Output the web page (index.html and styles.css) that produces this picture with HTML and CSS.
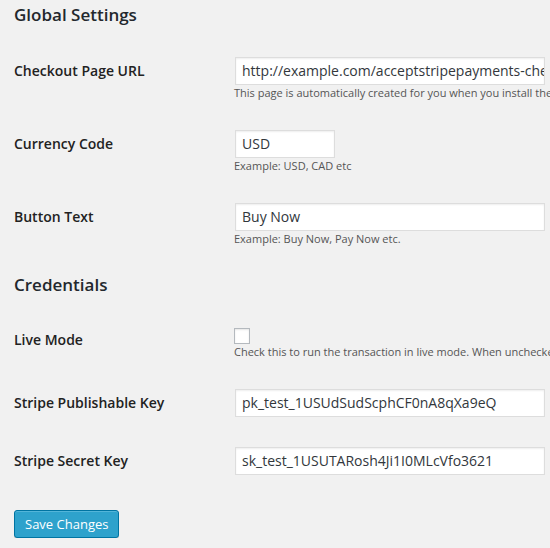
FILE: index.html
```html
<!DOCTYPE html>
<html>
<head>
<meta charset="utf-8">
<link rel="stylesheet" href="styles.css">
</head>
<body>
<div class="wrap">
  <h2 class="section-title first">Global Settings</h2>
  <div class="form-table">
    <div class="row">
      <div class="th">Checkout Page URL</div>
      <div class="td">
        <div class="input wide">http://example.com/acceptstripepayments-checkout</div>
        <p class="description">This page is automatically created for you when you install the plugin. Do not delete this page.</p>
      </div>
    </div>
    <div class="row">
      <div class="th">Currency Code</div>
      <div class="td">
        <div class="input small">USD</div>
        <p class="description">Example: USD, CAD etc</p>
      </div>
    </div>
    <div class="row">
      <div class="th">Button Text</div>
      <div class="td">
        <div class="input wide">Buy Now</div>
        <p class="description">Example: Buy Now, Pay Now etc.</p>
      </div>
    </div>
  </div>

  <h2 class="section-title">Credentials</h2>
  <div class="form-table">
    <div class="row">
      <div class="th th-check">Live Mode</div>
      <div class="td">
        <span class="checkbox"></span>
        <p class="description">Check this to run the transaction in live mode. When unchecked it will run in test mode.</p>
      </div>
    </div>
    <div class="row">
      <div class="th">Stripe Publishable Key</div>
      <div class="td">
        <div class="input wide">pk_test_1USUdSudScphCF0nA8qXa9eQ</div>
      </div>
    </div>
    <div class="row">
      <div class="th">Stripe Secret Key</div>
      <div class="td">
        <div class="input wide">sk_test_1USUTARosh4Ji1I0MLcVfo3621</div>
      </div>
    </div>
  </div>

  <p class="submit"><span class="button-primary">Save Changes</span></p>
</div>
</body>
</html>
```

FILE: styles.css
```css
html, body {
  margin: 0;
  padding: 0;
  background: #f1f1f1;
  overflow: hidden;
}
body {
  font-family: "Open Sans", "Liberation Sans", sans-serif;
  color: #222;
  font-size: 13px;
}
.wrap {
  padding-left: 14px;
  width: 900px;
}
.section-title {
  font-size: 17px;
  font-weight: 600;
  line-height: 24px;
  color: #23282d;
  margin: 12px 0 16px;
}
.section-title.first {
  margin-top: 3px;
  margin-bottom: 15px;
}
.form-table {
  display: flex;
  flex-direction: column;
}
.row {
  display: flex;
}
.th {
  width: 200px;
  padding: 20px 10px 20px 0;
  font-size: 14px;
  font-weight: 600;
  line-height: 18px;
  color: #222;
}
.th-check {
  padding-top: 18px;
}
.td {
  padding: 15px 10px 15px 11px;
  min-width: 0;
}
.input {
  box-sizing: border-box;
  height: 28px;
  border: 1px solid #ddd;
  background: #fff;
  box-shadow: inset 0 1px 2px rgba(0,0,0,.07);
  font-size: 14px;
  line-height: 26px;
  padding: 0 6px;
  color: #32373c;
  white-space: nowrap;
  overflow: hidden;
}
.input.wide { width: 310px; }
.input.small { width: 100px; }
.description {
  margin: 1px 0 0 -1px;
  font-size: 11px;
  line-height: 14px;
  color: #555;
  white-space: nowrap;
}
.checkbox {
  display: block;
  box-sizing: border-box;
  width: 16px;
  height: 16px;
  margin-left: -1px;
  border: 1px solid #b4b9be;
  background: #fff;
  box-shadow: inset 0 1px 2px rgba(0,0,0,.1);
}
.submit {
  margin: 20px 0 0;
  padding: 0;
}
.button-primary {
  display: inline-block;
  box-sizing: border-box;
  height: 28px;
  padding: 0 10px;
  line-height: 26px;
  font-size: 13px;
  color: #fff;
  background: #2ea2cc;
  border: 1px solid #0074a2;
  border-radius: 3px;
  box-shadow: inset 0 1px 0 rgba(120,200,230,.5), 0 1px 0 rgba(0,0,0,.15);
}
```
